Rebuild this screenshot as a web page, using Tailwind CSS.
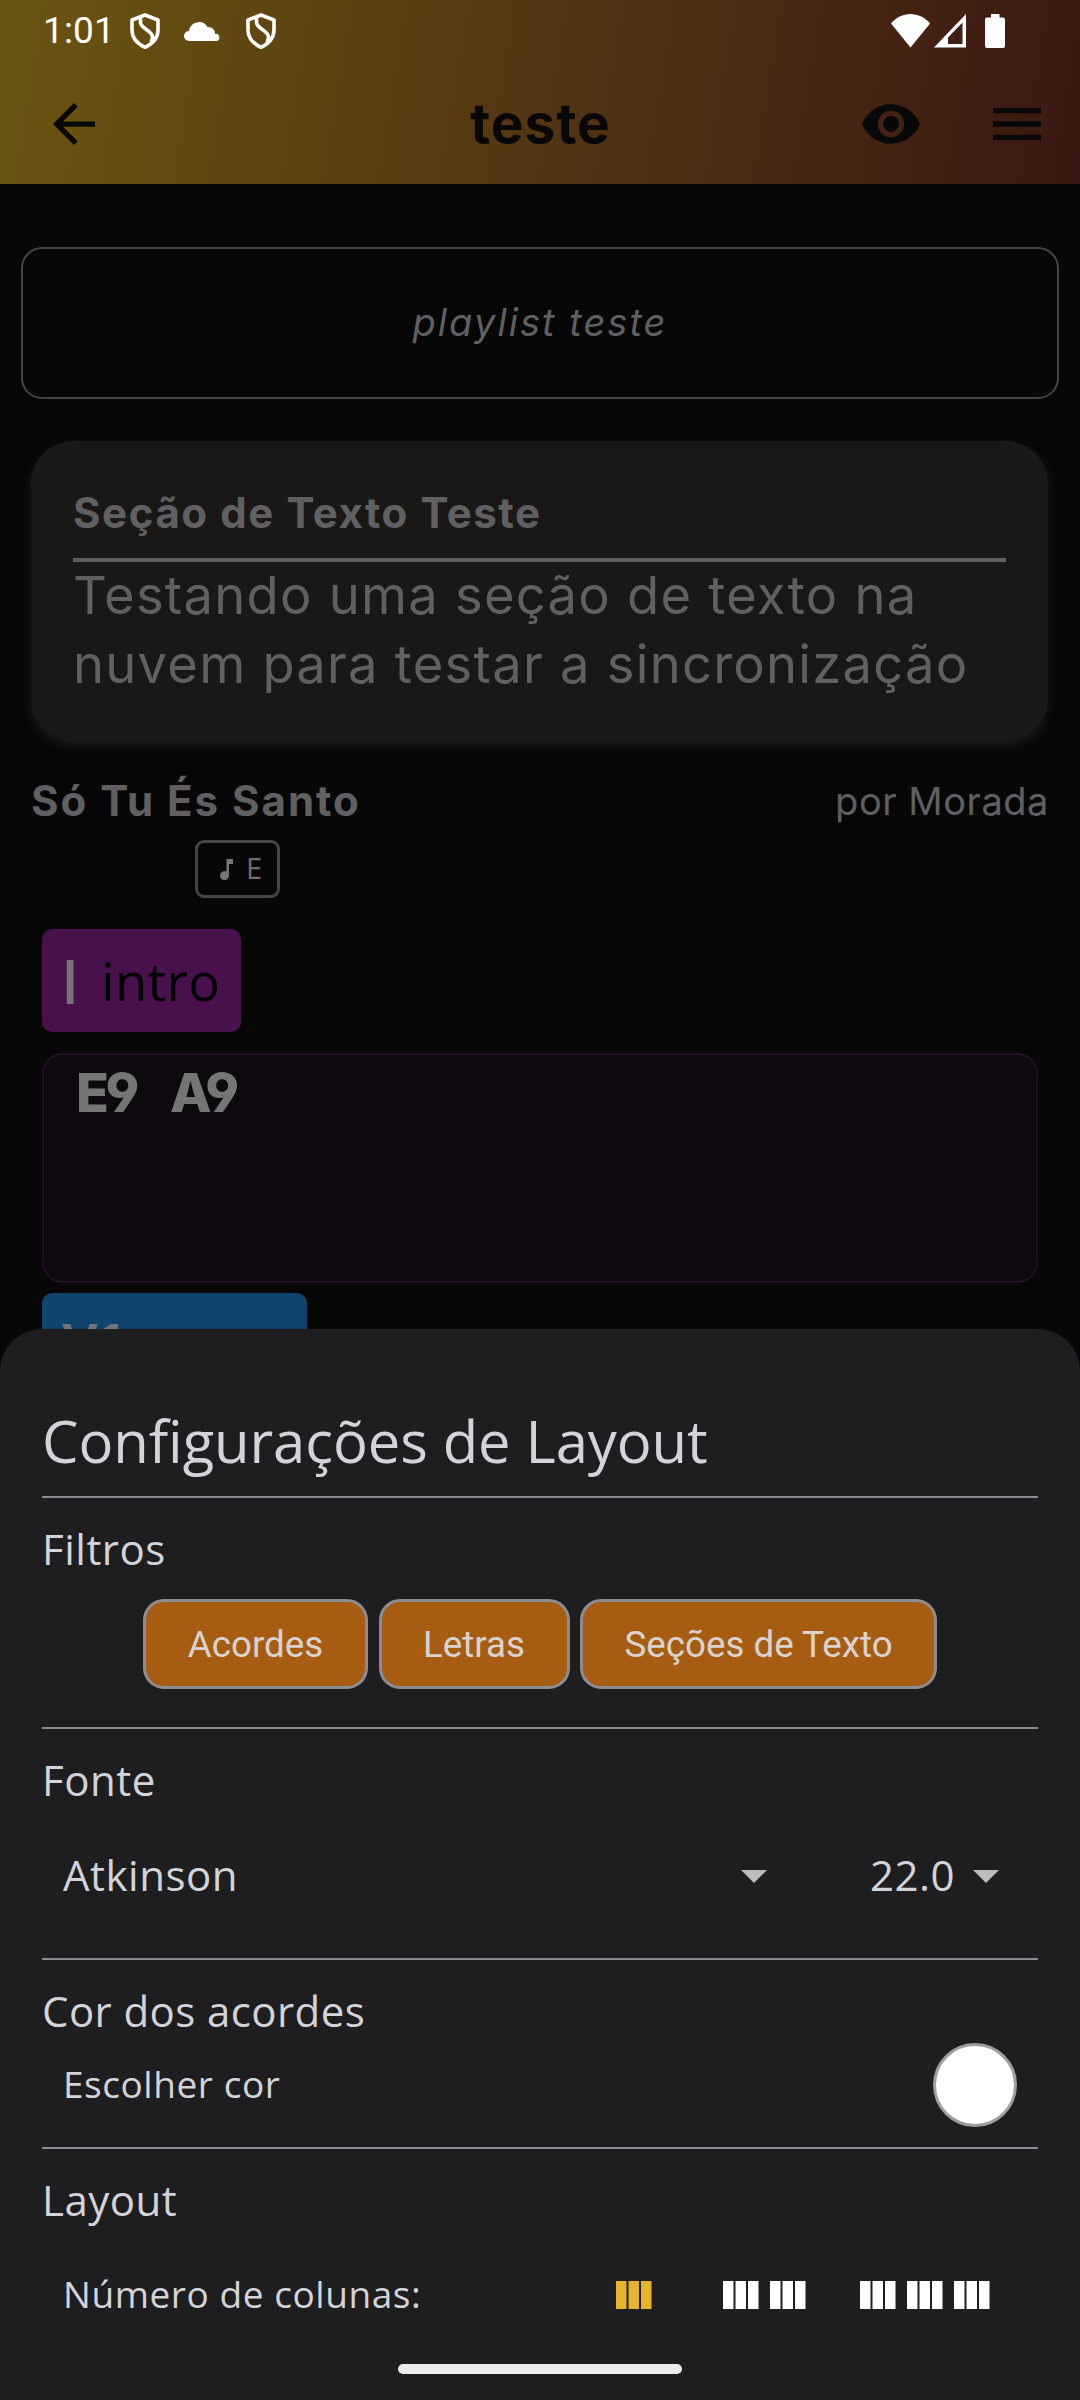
<!DOCTYPE html>
<html lang="pt-BR">
<head>
<meta charset="utf-8">
<title>teste</title>
<script src="https://cdn.jsdelivr.net/npm/@tailwindcss/browser@4"></script>
</head>
<body class="bg-[#070707]">
<div class="relative flex h-[2400px] w-[1080px] flex-col overflow-hidden bg-[#070707] font-['Open_Sans',sans-serif]">
  <header class="h-[184px] shrink-0 bg-[linear-gradient(99.67deg,#6b5511,#3b1713)]">
    <div class="flex h-[62px] items-center pr-[75px] pl-[43px]">
      <span class="w-[87px] font-['Roboto',sans-serif] text-[37px] leading-[62px] tracking-[0.15px] text-white">1:01</span>
      <svg class="h-9 w-[30px]" viewBox="0 0 30 36" fill="none" stroke="#fff" stroke-width="3.6" stroke-linejoin="round"><path d="M15 2 28 7v10c0 8-5 13.500-13 17.300C7 30.500 2 25 2 17V7Z"/><path d="M10.500 4.500v5c0 6 12 8 12 14.500 0 2-.8 3.500-1.500 5"/></svg>
      <svg class="ml-6 h-5 w-9" viewBox="0 0 36 20" fill="#fff"><path d="M5 20a5 5 0 0 1 0-10 10 10 0 0 1 18.500-4A6.500 6.500 0 0 1 31 13a3.500 3.500 0 0 1 1.500 7Z"/></svg>
      <svg class="ml-[26px] h-9 w-[30px]" viewBox="0 0 30 36" fill="none" stroke="#fff" stroke-width="3.6" stroke-linejoin="round"><path d="M15 2 28 7v10c0 8-5 13.500-13 17.300C7 30.500 2 25 2 17V7Z"/><path d="M10.500 4.500v5c0 6 12 8 12 14.500 0 2-.8 3.500-1.500 5"/></svg>
      <svg class="ml-auto h-[34px] w-[114px]" viewBox="0 0 114 34" fill="#fff"><path d="M0 9.500C5 3.500 12 0 19.500 0S34 3.500 39 9.500L19.500 33.500Z"/><path fill-rule="evenodd" d="M75 0v33.500H43Zm-3.500 8.500L57 23.500v6.500h14.500Z"/><path d="M100 0h8.500v3.500h3.500a2 2 0 0 1 2 2v26.500a2 2 0 0 1-2 2H96a2 2 0 0 1-2-2V5.500a2 2 0 0 1 2-2h4Z"/></svg>
    </div>
    <div class="grid h-[123px] grid-cols-[1fr_auto_1fr] items-center px-[53px]">
      <svg class="h-[42px] w-[42px]" viewBox="4 4 16 16" fill="#080808"><path d="M20 11H7.830l5.590-5.590L12 4l-8 8 8 8 1.410-1.410L7.830 13H20z"/></svg>
      <h1 class="-mt-[2px] -mr-px font-['Inter',sans-serif] text-[55px] leading-[60px] font-bold tracking-[1px] text-[#080808]">teste</h1>
      <div class="-mr-[14px] flex items-center justify-end gap-[73px]">
        <svg class="h-10 w-[58px]" viewBox="1 4.500 22 15" fill="#080808"><path d="M12 4.500C7 4.500 2.730 7.610 1 12c1.730 4.390 6 7.500 11 7.500s9.270-3.110 11-7.500c-1.730-4.390-6-7.500-11-7.500zM12 17c-2.760 0-5-2.240-5-5s2.240-5 5-5 5 2.240 5 5-2.240 5-5 5zm0-8c-1.660 0-3 1.340-3 3s1.340 3 3 3 3-1.340 3-3-1.340-3-3-3z"/></svg>
        <svg class="h-8 w-12" viewBox="3 6 18 12" preserveAspectRatio="none" fill="#080808"><path d="M3 18h18v-2H3v2zm0-5h18v-2H3v2zm0-7v2h18V6H3z"/></svg>
      </div>
    </div>
  </header>

  <main class="flex flex-1 flex-col font-['Inter',sans-serif]">
    <div class="mx-[21px] mt-[63px] flex h-[152px] items-center justify-center rounded-[21px] border-2 border-[#444448] pb-[2px] text-[38px] leading-[50px] tracking-[2.04px] text-[#606062] italic">playlist teste</div>

    <section class="mt-[42px] mr-[32px] ml-[31px] h-[300px] rounded-[42px] bg-[#191816] px-[42px] pt-[42px] text-[#606062] shadow-[0_4px_10px_#1c1c1c]">
      <h2 class="h-[79px] border-b-4 border-[#606062] text-[42px] leading-[60px] font-bold tracking-[1.58px]">Seção de Texto Teste</h2>
      <p class="-mt-px text-[52.500px] leading-[69px] tracking-[1.25px] whitespace-nowrap">Testando uma seção de texto na<br>nuvem para testar a sincronização</p>
    </section>

    <div class="mx-[31px] mt-[30px] flex h-[60px] justify-between leading-[60px] text-[#606062]">
      <h2 class="text-[42px] font-bold tracking-[1.98px]">Só Tu És Santo</h2>
      <p class="text-[38px] tracking-[0.55px]">por Morada</p>
    </div>
    <div class="mt-[9px] ml-[195px] flex h-[58px] w-[85px] rounded-[9px] border-[3px] border-[#444448] pl-[22px] text-[#6e6e70]">
      <svg class="mt-4 h-[21px] w-[13px]" viewBox="0 0 13 21" fill="#757575"><path d="M6.500 0H13v5H9v11.500a4.500 4.500 0 1 1-2.500-4Z"/></svg>
      <span class="ml-[13px] font-['Open_Sans',sans-serif] text-[29px] leading-[50px]">E</span>
    </div>

    <div class="mt-[31px] ml-[42px] flex h-[103px] w-[199px] rounded-[10px] bg-[#48114d] pl-5">
      <span class="text-[60px] leading-[107px] font-medium text-[#757575]">I</span>
      <span class="ml-[23px] font-['Open_Sans',sans-serif] text-[52.500px] leading-[103px] tracking-[0.34px] text-black">intro</span>
    </div>
    <div class="mx-[42px] mt-[21px] h-[230px] rounded-[21px] border-[2.500px] border-[#220e27] bg-[#0e090f] pl-[32px] text-[54px] leading-[76px] font-extrabold tracking-[-3.500px] [word-spacing:8.750px] whitespace-pre text-[#757575] [font-feature-settings:'cv04','ss01']">E9  A9</div>
    <div class="mt-[10px] ml-[42px] h-[103px] w-[265px] rounded-[10px] bg-[#10446d] pl-5 font-['Liberation_Sans',sans-serif] text-[54px] leading-[99px] font-bold text-[#757575]">V1</div>
  </main>

  <section class="absolute inset-x-0 top-[1329px] h-[1071px] rounded-t-[42px] bg-[#1e1e20] px-[42px] pt-[74px] text-[#d3d3d9]">
    <h2 class="h-[95px] border-b-2 border-[#8c8c94] text-[58px] leading-[75px] tracking-[-0.1px]">Configurações de Layout</h2>
    <div class="h-[231px] border-b-2 border-[#8c8c94]">
      <h3 class="pt-[21px] text-[42px] leading-[60px] tracking-[0.5px]">Filtros</h3>
      <div class="mt-5 flex h-[90px] justify-center gap-[10.500px] font-['Roboto',sans-serif] text-[36.750px] leading-[86px] text-[#d9d3d0]">
        <button class="w-[225px] rounded-[21px] border-[3px] border-[#8c8c94] bg-[#a65d12]">Acordes</button>
        <button class="w-[191px] rounded-[21px] border-[3px] border-[#8c8c94] bg-[#a65d12]">Letras</button>
        <button class="w-[357px] rounded-[21px] border-[3px] border-[#8c8c94] bg-[#a65d12]">Seções de Texto</button>
      </div>
    </div>
    <div class="h-[231px] border-b-2 border-[#8c8c94]">
      <h3 class="pt-[21px] text-[42px] leading-[60px] tracking-[0.5px]">Fonte</h3>
      <div class="flex items-center pt-[35px] pr-[39px] pl-[21px] text-[42px] leading-[60px] tracking-[0.5px]">
        <span>Atkinson</span>
        <svg class="mt-[3px] ml-auto h-[13px] w-[26px]" viewBox="0 0 26 13" fill="#bcbcbc"><path d="M0 0h26L13 13Z"/></svg>
        <span class="ml-[103px] w-[86px]">22.0</span>
        <svg class="mt-[3px] ml-[17px] h-[13px] w-[26px]" viewBox="0 0 26 13" fill="#bcbcbc"><path d="M0 0h26L13 13Z"/></svg>
      </div>
    </div>
    <div class="h-[189px] border-b-2 border-[#8c8c94]">
      <h3 class="pt-[21px] text-[42px] leading-[60px] tracking-[0.42px]">Cor dos acordes</h3>
      <div class="mt-[2px] flex h-[84px] items-center justify-between px-[21px] text-[37px] leading-[60px] tracking-[0.55px]">
        <span class="-mt-[2px]">Escolher cor</span>
        <div class="size-[84px] rounded-full border-[3px] border-[#9e9e9e] bg-white"></div>
      </div>
    </div>
    <h3 class="pt-[21px] text-[42px] leading-[60px] tracking-[0.5px]">Layout</h3>
    <div class="flex h-[95px] items-center pt-[35px] pr-[48px] pl-[21px] text-[37px] leading-[60px]">
      <span class="-mt-[2px] tracking-[0.56px] whitespace-nowrap">Número de colunas:</span>
      <svg class="ml-auto h-7 w-9 text-[#e6b428]" viewBox="0 0 36 28" fill="currentColor"><path d="M0 0h10.500v28H0zM12.500 0H23v28H12.500zM25 0h10.500v28H25z"/></svg>
      <div class="ml-[71px] flex gap-[11px] text-white">
        <svg class="h-7 w-9" viewBox="0 0 36 28" fill="currentColor"><path d="M0 0h10.500v28H0zM12.500 0H23v28H12.500zM25 0h10.500v28H25z"/></svg>
        <svg class="h-7 w-9" viewBox="0 0 36 28" fill="currentColor"><path d="M0 0h10.500v28H0zM12.500 0H23v28H12.500zM25 0h10.500v28H25z"/></svg>
      </div>
      <div class="ml-[54px] flex gap-[11px] text-white">
        <svg class="h-7 w-9" viewBox="0 0 36 28" fill="currentColor"><path d="M0 0h10.500v28H0zM12.500 0H23v28H12.500zM25 0h10.500v28H25z"/></svg>
        <svg class="h-7 w-9" viewBox="0 0 36 28" fill="currentColor"><path d="M0 0h10.500v28H0zM12.500 0H23v28H12.500zM25 0h10.500v28H25z"/></svg>
        <svg class="h-7 w-9" viewBox="0 0 36 28" fill="currentColor"><path d="M0 0h10.500v28H0zM12.500 0H23v28H12.500zM25 0h10.500v28H25z"/></svg>
      </div>
    </div>
  </section>
  <div class="absolute top-[2364px] left-[398px] h-[10px] w-[284px] rounded-full bg-[#ececec]"></div>
</div>
</body>
</html>
